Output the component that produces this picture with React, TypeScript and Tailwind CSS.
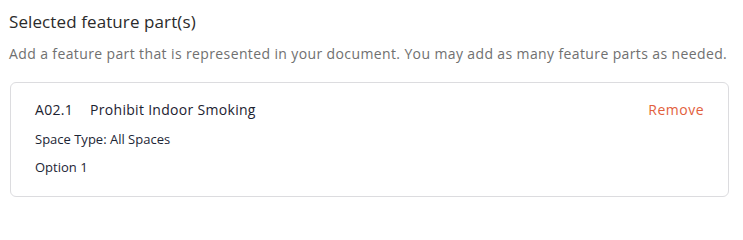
export default function App() {
  return (
    <div className="w-[743px] h-[204px] bg-white px-[9px] pt-[10px] font-['Open_Sans','Noto_Sans',sans-serif]">
      <h2 className="text-[17px] leading-[24px] tracking-[0.1px] text-[#2b2b2b]">Selected feature part(s)</h2>
      <p className="mt-[11px] text-[14px] leading-[18px] tracking-[0.38px] text-[#707070] whitespace-nowrap">
        Add a feature part that is represented in your document. You may add as many feature parts as needed.
      </p>
      <div className="mt-[19px] ml-px w-[719px] h-[115px] rounded-[6px] border border-[#dcdcdf] pl-[24px] pr-[24px] pt-[17px]">
        <div className="flex items-center justify-between text-[14px] leading-[20px] tracking-[0.3px]">
          <div className="flex gap-[17px] text-[#1c2230]">
            <span className="font-medium">A02.1</span>
            <span>Prohibit Indoor Smoking</span>
          </div>
          <button className="tracking-[0.5px] text-[#e2603c]">Remove</button>
        </div>
        <div className="mt-[9px] text-[13px] leading-[20px] text-[#1c2535]">
          <span className="font-medium">Space Type:</span> All Spaces
        </div>
        <div className="mt-[8px] text-[13px] leading-[20px] text-[#1c2535] font-medium">Option 1</div>
      </div>
    </div>
  );
}
